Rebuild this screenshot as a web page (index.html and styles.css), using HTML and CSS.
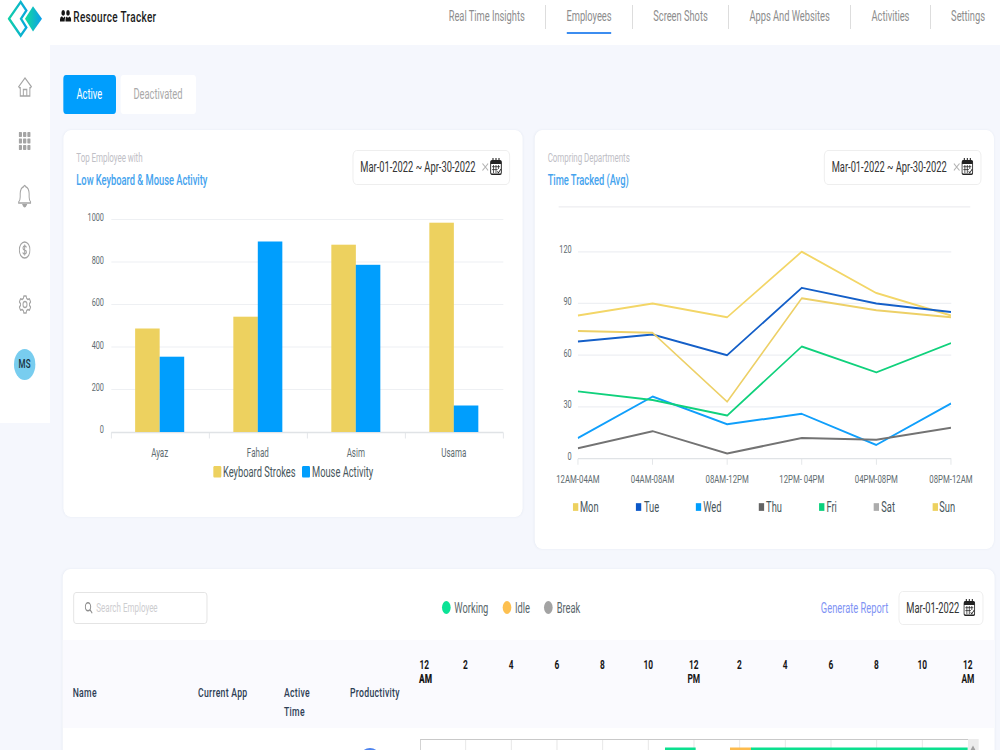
FILE: index.html
```html
<!DOCTYPE html>
<html lang="en">
<head>
<meta charset="utf-8">
<title>Resource Tracker</title>
<link rel="stylesheet" href="styles.css">
</head>
<body>
<svg class="defs" width="0" height="0" aria-hidden="true">
  <symbol id="calendar" viewBox="0 0 18 17">
    <rect x="1" y="2.6" width="16" height="13.6" rx="1.8" fill="none" stroke="#222" stroke-width="1.4"/>
    <path d="M1 2.800h16v3.200H1z" fill="#222"/>
    <path d="M4.500 0v4M9 0v4M13.500 0v4" stroke="#222" stroke-width="1.6"/>
    <path d="M3 8.700h12M3 11.600h8.500M5.300 7v8M9 7v8M12.700 7v4" stroke="#222" stroke-width=".9"/>
    <path d="M11 13.300l1.700 1.500 3.600-3.600" fill="none" stroke="#222" stroke-width="1.100"/>
  </symbol>
</svg>
<div class="screen">
<div class="app">
  <header class="topbar">
    <svg class="logo" width="54" height="38" viewBox="0 0 54 38">
      <defs>
        <linearGradient id="lg1" x1="0" y1="0" x2="1" y2="0"><stop offset="0" stop-color="#12cfa8"/><stop offset="1" stop-color="#08a8dc"/></linearGradient>
        <linearGradient id="lg2" x1="0" y1="0" x2="1" y2="0"><stop offset="0.1" stop-color="#12d6a0"/><stop offset="1" stop-color="#0a9dee"/></linearGradient>
      </defs>
      <path d="M20 2L2.500 18.700L20 35.700L28.500 27.500L20.500 18.800L28.500 10.500Z" fill="none" stroke="url(#lg1)" stroke-width="3"/>
      <path d="M38.500 6.200L52 18.800L38.500 31.500L26.500 18.800Z" fill="url(#lg2)"/>
    </svg>
    <div class="brand">
      <svg width="17" height="12" viewBox="0 0 17 12" fill="#151515">
        <ellipse cx="4.8" cy="2.9" rx="2.7" ry="2.8"/><ellipse cx="12" cy="2.9" rx="2.7" ry="2.8"/>
        <path d="M0 11.4V9.5Q0 6.6 3 6.3L5 8L6.7 6.4L8 7.2Q6.9 8.6 7 11.4ZM8.2 11.4V9.5Q8.4 6.7 10.4 6.4L12 8L13.8 6.4Q16.8 6.7 16.8 9.5V11.4Z"/>
      </svg>
      <span>Resource Tracker</span>
    </div>
    <nav class="nav">
      <a>Real Time Insights</a><a class="on">Employees</a><a>Screen Shots</a><a>Apps And Websites</a><a>Activities</a><a>Settings</a>
    </nav>
  </header>
  <div class="body">
    <aside class="side">
      <div class="slot"><svg width="21" height="20" viewBox="0 0 21 20"><path d="M1 9.7L10.5 1L20 9.7L18.7 10.8H17.8V19H3.4V10.8H2.3ZM8 19V12.4H13.2V19"/></svg></div>
      <div class="slot"><svg class="solid" width="18" height="18" viewBox="0 0 18 18"><g><rect width="5" height="5" rx="1"/><rect x="6.5" width="5" height="5" rx="1"/><rect x="13" width="5" height="5" rx="1"/><rect y="6.5" width="5" height="5" rx="1"/><rect x="6.5" y="6.5" width="5" height="5" rx="1"/><rect x="13" y="6.5" width="5" height="5" rx="1"/><rect y="13" width="5" height="5" rx="1"/><rect x="6.5" y="13" width="5" height="5" rx="1"/><rect x="13" y="13" width="5" height="5" rx="1"/></g></svg></div>
      <div class="slot"><svg width="20" height="24" viewBox="0 0 20 24"><path d="M1 19V18Q3.3 16.3 3.3 13V9.5Q3.6 4 8.4 2.7Q10 0.2 11.6 2.7Q16.4 4 16.7 9.5V13Q16.7 16.3 19 18V19Z"/><path d="M7.5 20.8Q10 24.5 12.5 20.8Z" fill="#a5a5a5"/></svg></div>
      <div class="slot"><svg width="18" height="18" viewBox="0 0 18 18"><circle cx="9" cy="9" r="8"/><path d="M11.7 6.4Q11.2 5 9 5Q6.6 5 6.5 6.9Q6.5 8.6 9 9Q11.7 9.4 11.7 11.2Q11.5 13 9 13Q6.5 13 6.2 11.4M9 3.5V14.5"/></svg></div>
      <div class="slot"><svg width="19" height="19" viewBox="0 0 19 19"><path d="M7.7 1H11.3L11.9 3.4L13.8 4.5L16.2 3.8L18 6.9L16.2 8.6V10.4L18 12.1L16.2 15.2L13.8 14.5L11.9 15.6L11.3 18H7.7L7.1 15.6L5.2 14.5L2.8 15.2L1 12.1L2.8 10.4V8.6L1 6.9L2.8 3.8L5.2 4.5L7.1 3.4Z" stroke-linejoin="round"/><circle cx="9.5" cy="9.5" r="3"/></svg></div>
      <div class="avatar">MS</div>
    </aside>
    <main class="main">
      <div class="tabs"><button class="tab tab-on">Active</button><button class="tab">Deactivated</button></div>
      <div class="cards">
        <section class="card card-bars">
          <div class="card-head">
            <div class="heading"><p class="sub">Top Employee with</p><h2>Low Keyboard &amp; Mouse Activity</h2></div>
            <div class="date"><span>Mar-01-2022 ~ Apr-30-2022</span><svg class="clear" width="10" height="8" viewBox="0 0 10 8"><path d="M.7.5L9.3 7.5M9.3.5L.7 7.5"/></svg><svg width="18" height="17"><use href="#calendar"/></svg></div>
          </div>
          <svg class="chart" width="689" height="290" viewBox="0 0 689 290">
            <path class="grid" d="M72 19.5H660M72 62H660M72 104.5H660M72 147H660M72 189.5H660"/>
            <path class="axis" d="M72 232.5H660M72 232.5v6M219 232.5v6M366 232.5v6M513 232.5v6M660 232.5v6"/>
            <g fill="#edd15f"><rect x="107.7" y="128.5" width="36.8" height="103.5"/><rect x="255" y="116.7" width="36.8" height="115.3"/><rect x="402" y="44.7" width="36.8" height="187.3"/><rect x="549" y="22.700" width="36.8" height="209.300"/></g>
            <g fill="#009efd"><rect x="144.5" y="156.7" width="36.8" height="75.3"/><rect x="291.7" y="41.5" width="36.8" height="190.5"/><rect x="438.7" y="64.8" width="36.8" height="167.2"/><rect x="585.7" y="205.5" width="36.8" height="26.5"/></g>
            <g class="ylab"><text x="61" y="21">1000</text><text x="61" y="64">800</text><text x="61" y="106">600</text><text x="61" y="149">400</text><text x="61" y="191">200</text><text x="61" y="233.5">0</text></g>
            <g class="xlab"><text x="144.5" y="257">Ayaz</text><text x="291.7" y="257">Fahad</text><text x="438.7" y="257">Asim</text><text x="585.7" y="257">Usama</text></g>
            <rect x="225" y="266" width="12" height="11.5" rx="1.5" fill="#edd15f"/><rect x="358" y="266" width="12" height="11.5" rx="1.5" fill="#009efd"/>
            <g class="leg"><text x="239.5" y="276.7">Keyboard Strokes</text><text x="373" y="276.7">Mouse Activity</text></g>
          </svg>
        </section>
        <section class="card card-lines">
          <div class="card-head">
            <div class="heading"><p class="sub">Compring Departments</p><h2>Time Tracked (Avg)</h2></div>
            <div class="date"><span>Mar-01-2022 ~ Apr-30-2022</span><svg class="clear" width="10" height="8" viewBox="0 0 10 8"><path d="M.7.5L9.3 7.5M9.3.5L.7 7.5"/></svg><svg width="18" height="17"><use href="#calendar"/></svg></div>
          </div>
          <svg class="chart" width="689" height="330" viewBox="0 0 689 330">
            <path class="rule" d="M36 6.8H654"/>
            <path class="grid" d="M65 51.7H625.5M65 103.4H625.5M65 155.2H625.5M65 207H625.5"/>
            <path class="axis" d="M65 258.8H625.5M65 258.8v6M177 258.8v6M289 258.8v6M401 258.8v6M513 258.8v6M625 258.8v6"/>
            <g class="series">
              <polyline stroke="#f3d667" points="65,115.5 177,103.4 289,117.2 401,51.6 513,93 625,115.5"/>
              <polyline stroke="#145fc8" points="65,141.4 177,134.5 289,155.2 401,87.8 513,103.4 625,112"/>
              <polyline stroke="#109ffb" points="65,238.1 177,196.6 289,224.3 401,213.9 513,245 625,203.5"/>
              <polyline stroke="#737373" points="65,248.4 177,231.2 289,253.6 401,238.1 513,239.8 625,227.7"/>
              <polyline stroke="#10d17c" points="65,191.4 177,200.1 289,215.6 401,146.5 513,172.4 625,143.1"/>
              <polyline stroke="#edd067" points="65,131 177,132.7 289,201.8 401,98.2 513,110.3 625,117.2"/>
            </g>
            <g class="ylab"><text x="55.5" y="53">120</text><text x="55.5" y="104.7">90</text><text x="55.5" y="156.5">60</text><text x="55.5" y="208.3">30</text><text x="55.5" y="260">0</text></g>
            <g class="xlab"><text x="65" y="283">12AM-04AM</text><text x="177" y="283">04AM-08AM</text><text x="289" y="283">08AM-12PM</text><text x="401" y="283">12PM- 04PM</text><text x="513" y="283">04PM-08PM</text><text x="625" y="283">08PM-12AM</text></g>
            <rect x="57.5" y="303.3" width="8" height="7.7" fill="#edd15f"/><rect x="152" y="303.3" width="8" height="7.7" fill="#0b57c8"/><rect x="242" y="303.3" width="8" height="7.7" fill="#009efd"/><rect x="336.5" y="303.3" width="8" height="7.7" fill="#636363"/><rect x="427" y="303.3" width="8" height="7.7" fill="#0ad17c"/><rect x="509" y="303.3" width="8" height="7.7" fill="#acacac"/><rect x="597.5" y="303.3" width="8" height="7.7" fill="#edd15f"/>
            <g class="leg"><text x="68" y="312">Mon</text><text x="164" y="312">Tue</text><text x="253" y="312">Wed</text><text x="347.5" y="312">Thu</text><text x="438" y="312">Fri</text><text x="520.5" y="312">Sat</text><text x="607.5" y="312">Sun</text></g>
          </svg>
        </section>
      </div>
      <section class="card table">
        <div class="tools">
          <div class="search"><svg width="12" height="12" viewBox="0 0 12 12"><circle cx="5" cy="4.8" r="4"/><path d="M8 7.8L11.5 11.3"/></svg><span>Search Employee</span></div>
          <div class="status"><span class="st"><i class="green"></i>Working</span><span class="st"><i class="amber"></i>Idle</span><span class="st"><i class="gray"></i>Break</span></div>
          <a class="report">Generate Report</a>
          <div class="date date-one"><span>Mar-01-2022</span><svg width="18" height="17"><use href="#calendar"/></svg></div>
        </div>
        <div class="thead">
          <div class="c-name">Name</div><div class="c-app">Current App</div><div class="c-time">Active Time</div><div class="c-prod">Productivity</div>
          <div class="hours"><span class="h-first">12<br><b>AM</b></span><span>2</span><span>4</span><span>6</span><span>8</span><span>10</span><span>12<br>PM</span><span>2</span><span>4</span><span>6</span><span>8</span><span>10</span><span>12<br>AM</span></div>
        </div>
        <div class="row">
          <svg class="ring" width="46" height="46" viewBox="0 0 46 46"><circle cx="23" cy="23" r="20.5"/></svg>
          <svg class="timeline" width="839" height="40" viewBox="0 0 839 40">
            <path d="M68.5 1V40M137 1V40M205.5 1V40M274 1V40M342.5 1V40M411 1V40M479.5 1V40M548 1V40M616.5 1V40M685 1V40M753.5 1V40" stroke="#e2e2e2"/>
            <path d="M.7 40V.5H822" fill="none" stroke="#c9c9c9" stroke-width="1.2"/>
            <rect x="367.5" y="8.5" width="46" height="30" fill="#0be08f"/><rect x="465" y="8.5" width="32" height="30" fill="#fdbb4d"/><rect x="496.500" y="8.5" width="325" height="30" fill="#0be08f"/>
            <rect x="822" y="0" width="16" height="40" fill="#ececec"/><path d="M825.500 11.500L829.500 6.500L833.500 11.500Z" fill="#a0a0a0"/>
          </svg>
        </div>
      </section>
    </main>
  </div>
</div>
</div>
</body>
</html>
```
FILE: styles.css
```css
* { box-sizing: border-box; }
html, body { margin: 0; width: 1000px; height: 750px; overflow: hidden; }
body { background: #f5f7fd; font-family: Roboto, "Liberation Sans", sans-serif; }
.defs { display: block; }

/* The interface is designed 1500px wide and condensed to the window. */
.screen { width: 1000px; height: 750px; overflow: hidden; contain: strict; }
.app { width: 1500px; height: 750px; overflow: hidden; transform: scaleX(0.66666); transform-origin: 0 0; background: #f5f7fd; display: flex; flex-direction: column; }

.topbar { height: 45px; flex: none; background: #fff; display: flex; align-items: flex-start; }
.logo { margin-left: 11px; flex: none; }
.brand { display: flex; align-items: center; gap: 3px; margin: 7.5px 0 0 25px; height: 19px; font-size: 15px; letter-spacing: .48px; font-weight: 500; color: #1c1c1c; white-space: nowrap; }
.brand svg { position: relative; top: -1px; }
.nav { margin-left: auto; padding: 5px 22.5px 0 0; display: flex; font-size: 14px; letter-spacing: -.04px; color: #8d8d8d; white-space: nowrap; }
.nav a { position: relative; height: 24px; line-height: 23px; margin-left: 31px; padding-right: 30.6px; border-right: 1.5px solid #ccc; }
.nav a:last-child { padding-right: 0; border-right: 0; }
.nav .on::after { content: ""; position: absolute; left: 0; right: 30.6px; top: 26.5px; height: 2.5px; background: #3c8df0; border-radius: 1px; }

.body { display: flex; align-items: flex-start; }
.side { width: 75px; height: 378px; flex: none; background: #fff; display: flex; flex-direction: column; align-items: center; padding: 14.5px 1px 0 0; }
.slot { height: 54.5px; display: flex; align-items: center; }
.slot svg { fill: none; stroke: #a5a5a5; stroke-width: 1.5; }
.slot svg.solid { fill: #a5a5a5; stroke: none; }
.avatar { width: 32px; height: 31px; margin-top: 17px; border-radius: 50%; background: #78cdef; color: #16303e; font-size: 12px; letter-spacing: .3px; font-weight: 500; line-height: 31px; text-align: center; }

.main { width: 1424px; padding: 30px 0 0 19.5px; }
.tabs { display: flex; gap: 7px; height: 38.5px; }
.tab { border: 0; border-radius: 4px; background: #fff; color: #a9a9a9; font: 14px Roboto, sans-serif; width: 113px; padding: 0; }
.tab-on { width: 79px; background: #009efd; color: #fff; }

.cards { display: flex; gap: 17.5px; align-items: flex-start; margin-top: 16px; height: 439px; }
.card { background: #fff; border-radius: 11px / 9px; box-shadow: 0 0 3px rgba(40, 70, 120, .07); }
.card-bars { width: 689.5px; height: 387px; }
.card-lines { width: 689.5px; height: 419px; }
.card-head { height: 70.5px; display: flex; justify-content: space-between; padding: 20px 19.5px 0 20px; }
.sub { margin: 0; font-size: 12px; letter-spacing: -.08px; line-height: 16px; color: #c0c0c6; }
h2 { margin: 6px 0 0; font-size: 14px; letter-spacing: -.03px; line-height: 16px; font-weight: 500; color: #45a3ee; }
.date { width: 236px; height: 35px; border: 1px solid #ebebeb; border-radius: 6px; display: flex; align-items: center; padding: 0 11px 0 11px; font-size: 14px; color: #333; white-space: nowrap; background: #fff; }
.date svg:last-child { margin-left: 2px; position: relative; top: -.5px; }
.clear { margin-left: auto; stroke: #b5b5b5; stroke-width: 1.3; }
.chart { display: block; }
.grid { stroke: #eef0f3; stroke-width: 1.2; fill: none; }
.rule { stroke: #ededf0; stroke-width: 1.2; }
.axis { stroke: #e0e3e6; stroke-width: 1.3; fill: none; }
.series { fill: none; stroke-width: 2; stroke-linejoin: round; }
.ylab { font-size: 11px; fill: #606c70; text-anchor: end; }
.xlab { font-size: 12px; fill: #606c70; text-anchor: middle; }
.card-lines .xlab { font-size: 11.7px; }
.card-lines .chart { margin-left: .6px; width: 688.4px; }
.leg { font-size: 14px; fill: #47565b; }

.table { width: 1398px; height: 260px; margin-left: -1px; overflow: hidden; }
.tools { height: 71px; display: flex; align-items: flex-start; padding: 22px 17px 0 16px; font-size: 14px; }
.search { width: 201px; height: 32px; margin-top: 1px; border: 1px solid #dedede; border-radius: 4px; display: flex; align-items: center; gap: 6px; padding-left: 16px; font-size: 12px; color: #cdcdd0; }
.search svg { fill: none; stroke: #8e8e8e; stroke-width: 1.5; }
.status { display: flex; gap: 21px; margin-left: 352px; height: 34px; color: #59666a; }
.st { display: flex; align-items: center; gap: 6px; }
.st i { width: 13px; height: 13px; border-radius: 50%; }
.green { background: #0be396; } .amber { background: #fdc050; } .gray { background: #a3a3a3; }
.report { margin-left: auto; line-height: 34px; color: #8194f4; }
.date-one { width: 127px; height: 34px; margin-left: 15px; padding-right: 11px; justify-content: space-between; }

.thead { display: flex; height: 88.5px; background: #fafafe; padding: 43.5px 0 0 15.5px; font-size: 13px; letter-spacing: .42px; line-height: 19px; font-weight: 500; color: #2d3e55; }
.c-name { width: 188px; } .c-app { width: 129px; } .c-time { width: 99px; padding-right: 50px; } .c-prod { width: 70.5px; white-space: nowrap; }
.hours { display: grid; grid-template-columns: repeat(13, 68.5px); margin: -25.5px 0 0; font-size: 12.5px; letter-spacing: 0; line-height: 14px; font-weight: 700; color: #161616; text-align: center; }
.h-first { padding-left: 13px; }
.h-first b { margin-left: 4px; }
.row { display: flex; height: 42px; padding: 10.5px 0 0 438px; }
.ring { margin-top: 8px; fill: none; stroke: #4d83ee; stroke-width: 3; }
.timeline { margin-left: 52px; }
```
